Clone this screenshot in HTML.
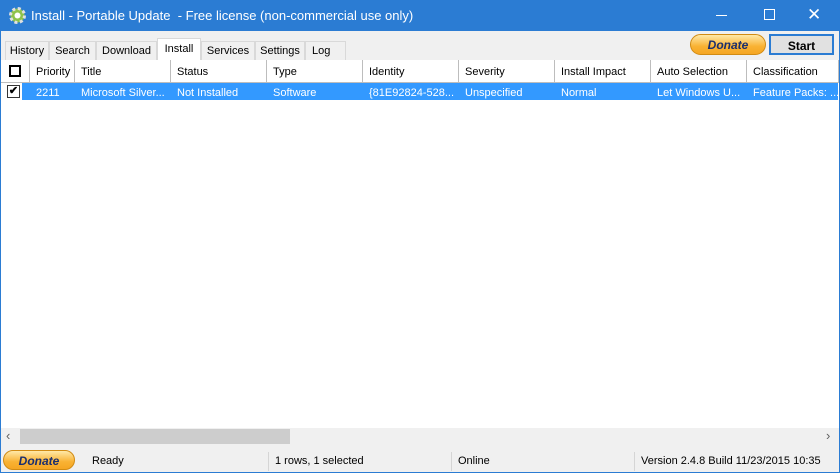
<!DOCTYPE html>
<html><head><style>
*{margin:0;padding:0;box-sizing:border-box}
body{width:840px;height:473px;overflow:hidden;font-family:"Liberation Sans",Arial,sans-serif;font-size:11px;color:#000;background:#2b7cd3;position:relative}
.abs{position:absolute}
#title{left:0;top:0;width:840px;height:31px;background:#2b7cd3;color:#fff;font-size:13px}
#client{left:1px;top:31px;width:838px;height:441px;background:#f0f0f0}
.tab{position:absolute;top:41px;height:19px;border:1px solid #d9d9d9;border-bottom:none;background:#f0f0f0;padding:3px 0 0 0;text-align:center}
.hdr{position:absolute;top:60px;height:23px;background:#fff;border-right:1px solid #bdbdbd;border-bottom:1px solid #bdbdbd;padding:6px 0 0 6px;white-space:nowrap;overflow:hidden}
.cell{position:absolute;top:83px;height:17px;color:#fff;padding:3px 0 0 6px;white-space:nowrap;overflow:hidden}
.sb{position:absolute;top:452px;height:19px;border-left:1px solid #d5d5d5;padding:3px 0 0 6px;font-size:11px}
.donate{background:linear-gradient(#ffe9a8,#f9b233 60%,#f5a623);border:1px solid #d18b13;border-radius:11px;color:#1a2e6e;font-weight:bold;font-style:italic;text-align:center}
</style></head><body>
<div id="title" class="abs">
 <svg class="abs" style="left:9px;top:7px" width="17" height="17" viewBox="0 0 17 17"><circle cx="8.5" cy="8.5" r="7" fill="#8fc34a"/><circle cx="8.5" cy="8.5" r="7" fill="none" stroke="#e0e0e0" stroke-width="3" stroke-dasharray="3 2.5"/><circle cx="8.5" cy="8.5" r="3" fill="#fff"/></svg>
 <div class="abs" style="left:31px;top:8px">Install - Portable Update&nbsp; - Free license (non-commercial use only)</div>
 <div class="abs" style="left:716px;top:15px;width:11px;height:1px;background:#fff"></div>
 <div class="abs" style="left:764px;top:9px;width:11px;height:11px;border:1px solid #fff"></div>
 <div class="abs" style="left:807px;top:5px;font-size:17px">✕</div>
</div>
<div id="client" class="abs"></div>
<div class="tab" style="left:5px;width:44px">History</div>
<div class="tab" style="left:49px;width:47px">Search</div>
<div class="tab" style="left:96px;width:61px">Download</div>
<div class="tab" style="left:157px;width:44px;top:38px;height:22px;background:#fff;padding-top:4px">Install</div>
<div class="tab" style="left:201px;width:54px">Services</div>
<div class="tab" style="left:255px;width:50px">Settings</div>
<div class="tab" style="left:305px;width:41px;text-align:left;padding-left:6px">Log</div>
<div class="abs donate" style="left:690px;top:34px;width:76px;height:21px;font-size:12px;padding-top:3px">Donate</div>
<div class="abs" style="left:769px;top:34px;width:65px;height:21px;background:#e1e1e1;border:2px solid #2b7cd3;font-weight:bold;font-size:12px;text-align:center;padding-top:3px">Start</div>
<div class="abs" style="left:1px;top:60px;width:838px;height:368px;background:#fff"></div>
<div class="hdr" style="left:1px;width:29px"><div style="width:12px;height:12px;border:2px solid #000;margin:0 0 0 2px;position:relative;top:-1px"></div></div>
<div class="hdr" style="left:30px;width:45px">Priority</div>
<div class="hdr" style="left:75px;width:96px">Title</div>
<div class="hdr" style="left:171px;width:96px">Status</div>
<div class="hdr" style="left:267px;width:96px">Type</div>
<div class="hdr" style="left:363px;width:96px">Identity</div>
<div class="hdr" style="left:459px;width:96px">Severity</div>
<div class="hdr" style="left:555px;width:96px">Install Impact</div>
<div class="hdr" style="left:651px;width:96px">Auto Selection</div>
<div class="hdr" style="left:747px;width:92px">Classification</div>
<div class="abs" style="left:22px;top:83px;width:816px;height:17px;background:#3399ff"></div>
<div class="abs" style="left:7px;top:85px;width:13px;height:13px;border:1px solid #333;background:#fff;font-size:11px;line-height:11px;text-align:center;font-weight:bold">✔</div>
<div class="cell" style="left:30px;padding-top:4px">2211</div>
<div class="cell" style="left:75px;padding-top:4px">Microsoft Silver...</div>
<div class="cell" style="left:171px;padding-top:4px">Not Installed</div>
<div class="cell" style="left:267px;padding-top:4px">Software</div>
<div class="cell" style="left:363px;padding-top:4px">{81E92824-528...</div>
<div class="cell" style="left:459px;padding-top:4px">Unspecified</div>
<div class="cell" style="left:555px;padding-top:4px">Normal</div>
<div class="cell" style="left:651px;padding-top:4px">Let Windows U...</div>
<div class="cell" style="left:747px;padding-top:4px">Feature Packs: ...</div>
<div class="abs" style="left:1px;top:428px;width:838px;height:17px;background:#f0f0f0"></div>
<div class="abs" style="left:20px;top:429px;width:270px;height:15px;background:#cdcdcd"></div>
<div class="abs" style="left:6px;top:428px;color:#606060;font-size:13px">‹</div>
<div class="abs" style="left:826px;top:428px;color:#606060;font-size:13px">›</div>
<div class="abs donate" style="left:3px;top:450px;width:72px;height:20px;font-size:12px;padding-top:3px">Donate</div>
<div class="sb" style="left:86px;border:none">Ready</div>
<div class="sb" style="left:268px">1 rows, 1 selected</div>
<div class="sb" style="left:451px">Online</div>
<div class="sb" style="left:634px;white-space:nowrap">Version 2.4.8 Build 11/23/2015 10:35</div>
</body></html>
